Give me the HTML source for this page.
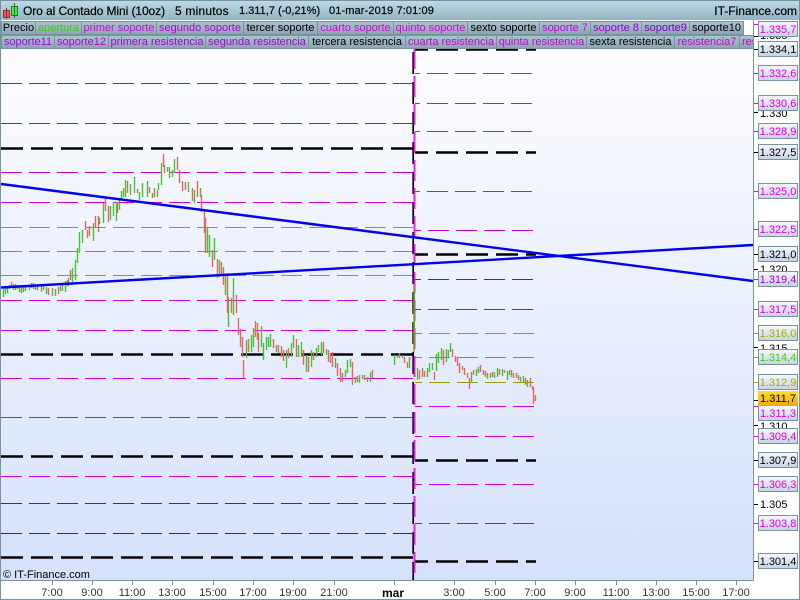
<!DOCTYPE html>
<html><head><meta charset="utf-8"><style>
html,body{margin:0;padding:0;background:#fff}
#p{position:relative;width:800px;height:600px;overflow:hidden;background:#fff;font:11px "Liberation Sans",Arial,sans-serif;color:#000}
#p div{position:absolute;white-space:nowrap;box-sizing:border-box}
.t{height:14px;line-height:13px;text-align:center;background:linear-gradient(#a9c3d0,#8ba5b3);border:1px solid #7a929e;overflow:hidden}
.b{left:758px;width:40px;height:16px;line-height:16px;text-align:center;border:1px solid #7a929e;background:linear-gradient(#f4f7fc,#c6d4e6)}
.a{left:759px;width:36px;height:14px;line-height:14px;text-align:left}
.x{top:587px;height:13px;line-height:13px;width:40px;text-align:center;color:#333}
.h{top:4px;font-size:12px;line-height:14px;-webkit-text-stroke:.2px #000}
.m{color:#e000d8}.g{color:#40cc10}.o{color:#aaaa00}
</style></head><body><div id="p">
<div style="left:0;top:0;width:800px;height:20px;background:linear-gradient(#bcdae6,#94b4c4);border-top:1px solid #7a929e;border-left:1px solid #7a929e;border-right:1px solid #7a929e"></div>
<div style="left:0;top:20px;width:800px;height:29px;background:#fff;border-left:1px solid #7a929e"></div>
<div style="left:1px;top:48px;width:752px;height:532px;background:linear-gradient(#fdfdff,#d5e1fb)"></div>
<svg style="position:absolute;left:0;top:0" width="800" height="600">
<defs><clipPath id="c"><rect x="1" y="48" width="752" height="532"/></clipPath></defs>
<g clip-path="url(#c)" fill="none">
<g stroke-width="1" stroke-dasharray="21 7">
<path stroke="#aa00bb" d="M1 83.5H413M1 123.5H413"/>
<path stroke="#c800c8" d="M1 172.5H413"/>
<path stroke="#dd00dd" d="M1 202.5H413M1 300.5H413M1 330.5H413M1 378.5H413M1 417.5H413M1 476.5H413"/>
<path stroke="#999911" d="M1 227.5H413M1 275.5H413"/>
<path stroke="#44bb11" d="M1 251.5H413"/>
<path stroke="#8800aa" d="M1 503.5H413"/>
<path stroke="#660099" d="M1 533.5H413"/>
</g>
<g stroke="#000" stroke-width="2.6" stroke-dasharray="22 8">
<path d="M1 148.5H413M1 354.5H413M1 456.5H413M1 557.5H413"/>
<path stroke-dashoffset="9" d="M415 49.5H536M415 152.5H536M415 254.5H536M415 460.5H536M415 561.5H536"/>
</g>
<g stroke-width="1" stroke-dasharray="21 7">
<path stroke="#dd00dd" stroke-dashoffset="16" d="M415 73.5H532M415 103.5H532M415 131.5H532M415 191.5H532"/>
<path stroke="#cc00cc" stroke-dashoffset="15" d="M415 230.5H533"/>
<path stroke="#8800bb" stroke-dashoffset="15" d="M415 279.5H533"/>
<path stroke="#bb00bb" stroke-dashoffset="15" d="M415 309.5H533"/>
<path stroke="#999911" stroke-dashoffset="14" d="M415 333.5H534M415 382.5H534"/>
<path stroke="#44bb11" stroke-dashoffset="14" d="M415 357.5H534"/>
<path stroke="#dd00dd" stroke-dashoffset="14" d="M415 406.5H534M415 436.5H534M415 484.5H534"/>
<path stroke="#bb00cc" stroke-dashoffset="14" d="M415 523.5H534"/>
</g>
<path stroke="#000" stroke-width="1.7" stroke-dasharray="22 8" d="M413.2 52V580"/>
<path stroke="#e000e0" stroke-width="2" stroke-dasharray="21 7" opacity=".85" d="M414.5 48V580"/>
<path stroke="#999911" stroke-width="1.5" d="M414 285V352"/>
<path stroke="#44bb11" stroke-width="1" d="M414.5 290V345"/>
<g transform="translate(.5 0)">
<path stroke="#44c233" stroke-width="1.4" d="M3 289V297M5 288V294M7 286V293M9 285V289M13 284V290M17 285V289M19 286V292M21 286V293M25 287V291M29 285V290M33 283V289M35 285V290M41 284V292M46 287V294M52 288V296M58 287V294M62 285V291M65 281V292M68 278V286M72 268V282M75 260V280M77 248V263M79 232V253M82 230V243M93 223V241M99 218V224M103 203V223M110 206V220M113 202V216M116 202V221M119 200V210M121 191V200M123 188V197M125 180V197M130 184V195M134 177V193M139 192V200M142 183V197M147 181V197M154 188V197M158 183V190M161 163V185M167 167V172M169 167V178M172 170V177M174 159V173M188 182V192M194 190V203M200 188V197M207 228V253M209 235V257M214 238V260M219 260V277M225 275V295M228 297V327M233 278V315M246 340V358M251 335V352M253 328V347M261 326V347M263 343V360M266 337V350M268 337V347M270 334V347M278 345V353M286 350V368M291 343V357M293 335V348M298 345V357M301 342V357M306 355V372M311 350V367M316 348V357M318 345V352M321 342V355M326 349V355M335 358V368M345 370V377M347 360V373M350 359V367M355 377V383M359 375V383M364 375V380M370 372V382M394 355V365M397 355V358M402 355V358M409 357V368M417 368V380M427 368V377M429 363V372M432 363V370M436 354V371M438 352V363M441 348V360M446 349V362M448 350V357M450 343V352M471 372V383M476 369V376M478 367V373M487 373V379M490 373V378M494 372V378M497 368V377M502 369V376M507 371V380M509 370V375M513 373V378M520 377V382M523 376V382M527 380V387"/>
<path stroke="#e46464" stroke-width="1.4" d="M11 282V288M15 284V290M23 286V292M31 283V288M37 284V290M43 285V290M48 288V295M55 289V296M60 286V291M67 280V286M70 270V280M85 221V230M87 230V238M89 226V236M95 216V227M98 216V232M105 198V211M108 206V222M117 202V213M127 181V193M137 189V193M149 187V193M152 193V198M157 190V197M163 154V167M164 165V173M177 157V170M179 170V183M182 181V191M185 182V190M192 188V201M197 181V197M201 195V212M204 209V233M205 218V253M212 250V267M217 259V278M221 262V275M223 267V285M227 273V313M231 298V313M236 295V313M238 318V335M240 329V347M242 337V357M243 360V378M248 339V352M255 321V337M257 323V340M258 333V352M273 339V348M276 345V352M281 346V357M283 350V361M288 348V358M296 339V357M303 350V365M308 357V372M313 352V360M323 342V353M328 350V362M330 353V363M332 352V367M337 363V376M340 368V382M342 373V382M352 362V385M357 376V382M362 375V379M367 377V382M372 370V378M399 353V358M404 357V363M407 362V368M419 370V379M422 368V377M424 371V377M434 372V380M443 350V365M452 349V357M455 356V362M457 357V366M459 363V373M462 366V370M464 368V375M467 373V378M469 378V389M473 370V375M480 365V372M483 370V375M485 371V377M492 372V377M499 369V375M504 370V373M511 370V377M516 373V378M518 375V380M525 378V385M530 378V387M532 386V390M533 387V404M535 395V401"/>
</g>
<path stroke="#0000ee" stroke-width="2.4" d="M1 184L753 281M1 287.5L753 245"/>
</g>
<path fill="none" stroke="#7a929e" d="M753.5 20V580.5H1M0.5 0V599.5H799.5V0"/>
<path fill="none" stroke="#7a929e" d="M52.5 581V585M92.5 581V585M132.5 581V585M172.5 581V585M213.5 581V585M253.5 581V585M293.5 581V585M334.5 581V585M394.5 581V585M454.5 581V585M495.5 581V585M535.5 581V585M575.5 581V585M616.5 581V585M656.5 581V585M696.5 581V585M736.5 581V585"/>
<path fill="#ee5555" stroke="#993333" d="M3.5 10.5H9.5V17.5H3.5Z"/>
<path stroke="#993333" d="M6.5 8V19"/>
<path fill="#44ee44" stroke="#227722" d="M11.5 6.5H17.5V15.5H11.5Z"/>
<path stroke="#227722" d="M14.5 3V18"/>
<g stroke="#000"><path d="M754 49.5H758M754 152.5H758M754 254.5H758M754 400.5H758M754 460.5H758M754 561.5H758M754 112.5H758M754 269.5H758M754 347.5H758M754 425.5H758M754 504.5H758M754 36.5H758"/></g>
<g stroke="#dd00dd"><path d="M754 24.5H758M754 73.5H758M754 103.5H758M754 131.5H758M754 191.5H758M754 229.5H758M754 279.5H758M754 309.5H758M754 406.5H758M754 436.5H758M754 484.5H758M754 523.5H758"/></g>
<path stroke="#aaaa00" d="M754 333.5H758M754 382.5H758"/>
<path stroke="#40cc10" d="M754 357.5H758"/>
</svg>

<div class="h" style="left:23px;letter-spacing:-.08px">Oro al Contado Mini (10oz)</div>
<div class="h" style="left:175px;letter-spacing:.2px">5 minutos</div>
<div class="h" style="left:239px;font-size:11px">1.311,7 (-0,21%)</div>
<div class="h" style="left:329px;font-size:11px;letter-spacing:.12px">01-mar-2019 7:01:09</div>
<div class="h" style="right:3px">IT-Finance.com</div>

<div class="t" style="left:1px;top:21px;width:35px">Precio</div>
<div class="t" style="left:35px;top:21px;width:47px;color:#40cc10">apertura</div>
<div class="t" style="left:81px;top:21px;width:76px;color:#dd00dd">primer soporte</div>
<div class="t" style="left:156px;top:21px;width:88px;color:#bb00d0">segundo soporte</div>
<div class="t" style="left:243px;top:21px;width:75px">tercer soporte</div>
<div class="t" style="left:317px;top:21px;width:77px;color:#dd00dd">cuarto soporte</div>
<div class="t" style="left:393px;top:21px;width:75px;color:#dd00dd">quinto soporte</div>
<div class="t" style="left:467px;top:21px;width:73px">sexto soporte</div>
<div class="t" style="left:539px;top:21px;width:52px;color:#cc00dd">soporte 7</div>
<div class="t" style="left:590px;top:21px;width:52px;color:#a000d0">soporte 8</div>
<div class="t" style="left:641px;top:21px;width:49px;color:#8000c0">soporte9</div>
<div class="t" style="left:689px;top:21px;width:55px">soporte10</div>

<div class="t" style="left:1px;top:35px;width:54px;color:#aa00dd">soporte11</div>
<div class="t" style="left:54px;top:35px;width:55px;color:#bb00d0">soporte12</div>
<div class="t" style="left:108px;top:35px;width:98px;color:#aa00cc">primera resistencia</div>
<div class="t" style="left:205px;top:35px;width:104px;color:#aa00cc">segunda resistencia</div>
<div class="t" style="left:308px;top:35px;width:98px">tercera resistencia</div>
<div class="t" style="left:405px;top:35px;width:92px;color:#cc00cc">cuarta resistencia</div>
<div class="t" style="left:496px;top:35px;width:91px;color:#cc00cc">quinta resistencia</div>
<div class="t" style="left:586px;top:35px;width:89px">sexta resistencia</div>
<div class="t" style="left:674px;top:35px;width:66px;color:#cc00cc">resistencia7</div>
<div class="t" style="left:739px;top:35px;width:15px;color:#cc00cc;text-align:left;padding-left:2px">resistencia8</div>

<div class="a" style="left:760px;top:29px">1.335</div>
<div class="a" style="left:760px;top:107px">1.330</div>
<div class="a" style="left:760px;top:263px">1.320</div>
<div class="a" style="left:760px;top:342px">1.315</div>
<div class="a" style="left:760px;top:420px">1.310</div>
<div class="a" style="left:760px;top:498px">1.305</div>

<div class="b m" style="top:21px">1.335,7</div>
<div class="b" style="top:41px">1.334,1</div>
<div class="b m" style="top:65px">1.332,6</div>
<div class="b m" style="top:95px">1.330,6</div>
<div class="b m" style="top:123px">1.328,9</div>
<div class="b" style="top:144px">1.327,5</div>
<div class="b m" style="top:183px">1.325,0</div>
<div class="b m" style="top:221px">1.322,5</div>
<div class="b" style="top:246px">1.321,0</div>
<div class="b" style="top:271px;color:#a000d0">1.319,4</div>
<div class="b m" style="top:301px">1.317,5</div>
<div class="b o" style="top:325px">1.316,0</div>
<div class="b g" style="top:349px">1.314,4</div>
<div class="b o" style="top:374px">1.312,9</div>
<div class="b m" style="top:405px">1.311,3</div>
<div class="b" style="top:391px;height:15px;border:0;background:linear-gradient(#ffdc30,#f0aa00)">1.311,7</div>
<div class="b m" style="top:428px">1.309,4</div>
<div class="b" style="top:452px">1.307,9</div>
<div class="b m" style="top:476px">1.306,3</div>
<div class="b m" style="top:515px">1.303,8</div>
<div class="b" style="top:553px">1.301,4</div>

<div style="left:3px;top:569px;height:13px;line-height:13px">© IT-Finance.com</div>

<div class="x" style="left:32px">7:00</div>
<div class="x" style="left:72px">9:00</div>
<div class="x" style="left:112px">11:00</div>
<div class="x" style="left:152px">13:00</div>
<div class="x" style="left:193px">15:00</div>
<div class="x" style="left:233px">17:00</div>
<div class="x" style="left:273px">19:00</div>
<div class="x" style="left:314px">21:00</div>
<div class="x" style="left:373px;font-weight:bold;font-size:12px;color:#000">mar</div>
<div class="x" style="left:434px">3:00</div>
<div class="x" style="left:475px">5:00</div>
<div class="x" style="left:515px">7:00</div>
<div class="x" style="left:555px">9:00</div>
<div class="x" style="left:596px">11:00</div>
<div class="x" style="left:636px">13:00</div>
<div class="x" style="left:676px">15:00</div>
<div class="x" style="left:716px">17:00</div>
</div></body></html>
